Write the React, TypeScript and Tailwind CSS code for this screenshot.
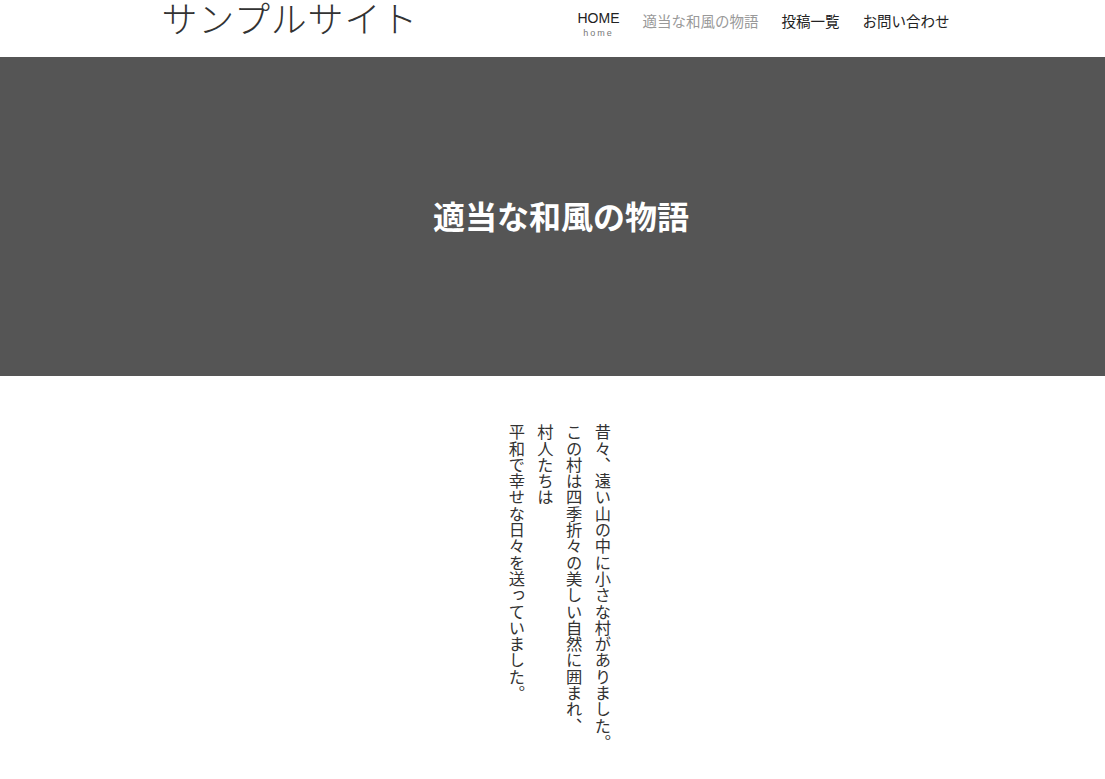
const jp = "font-['Liberation_Sans','Noto_Sans_CJK_JP',sans-serif]";

const navItems = [
  { label: "適当な和風の物語", active: true },
  { label: "投稿一覧", active: false },
  { label: "お問い合わせ", active: false },
];

const lines = [
  "昔々、遠い山の中に小さな村がありました。",
  "この村は四季折々の美しい自然に囲まれ、",
  "村人たちは",
  "平和で幸せな日々を送っていました。",
];

const App = () => {
  return (
    <div className={`min-h-screen bg-white text-[#333] ${jp}`}>
      <header className="h-[57px] bg-white">
        <div className="w-[790px] mx-auto h-full flex items-start justify-between pl-[4px]">
          <h1 className="text-[36px] leading-none font-light tracking-[0.8px] pt-[3px] text-[#333]">
            サンプルサイト
          </h1>
          <nav className="flex items-start gap-[23px] pt-[10px] -mr-[2px]">
            <a href="#" className="flex flex-col items-center text-[#222]">
              <span className="text-[14px] leading-[16px]">HOME</span>
              <span className="text-[9px] leading-[10px] tracking-[2px] text-[#777] mt-[2px]">
                home
              </span>
            </a>
            {navItems.map((item) => (
              <a
                key={item.label}
                href="#"
                className={`text-[14.5px] leading-[16px] pt-[4px] ${
                  item.active ? "text-[#999]" : "text-[#222]"
                }`}
              >
                {item.label}
              </a>
            ))}
          </nav>
        </div>
      </header>

      <section className="h-[319px] bg-[#555555] flex items-center justify-center">
        <h2 className="text-[32px] font-bold text-white pl-[17px] pt-[2px]">
          適当な和風の物語
        </h2>
      </section>

      <main className="flex justify-center pt-[48px] pl-[12px]">
        <div className="[writing-mode:vertical-rl] text-[16.3px] leading-[28.7px] text-[#333] h-[340px]">
          {lines.map((line) => (
            <p key={line}>{line}</p>
          ))}
        </div>
      </main>
    </div>
  );
};

export default App;
